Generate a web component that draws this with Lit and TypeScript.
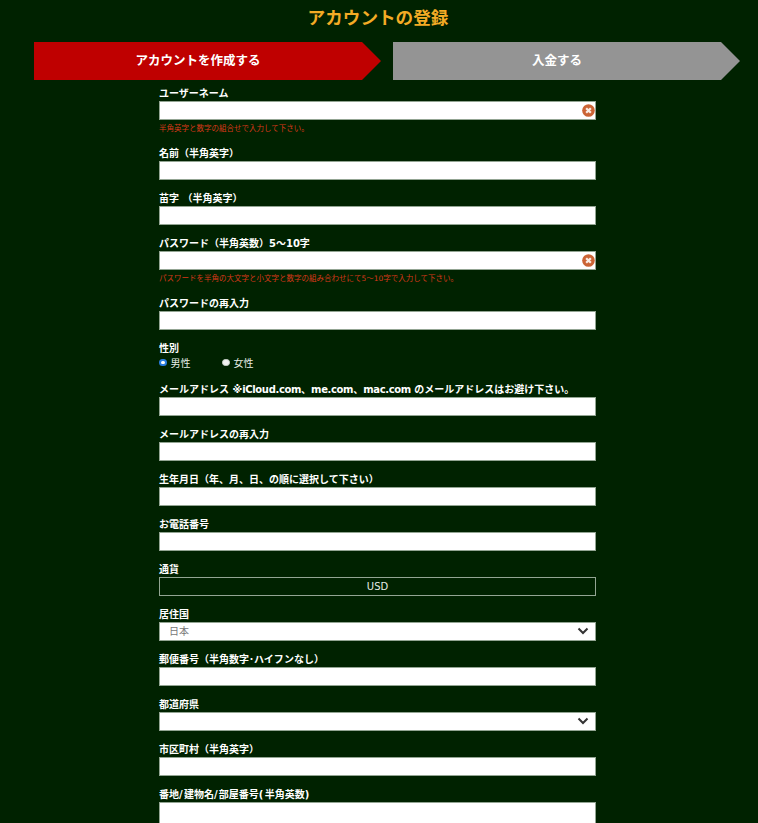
import { LitElement, html, css, nothing, TemplateResult } from "lit";
import { customElement } from "lit/decorators.js";

type Field = {
  label: string | TemplateResult;
  kind?: "text" | "select" | "readonly" | "radio";
  value?: string;
  error?: string;
};

const FIELDS: Field[] = [
  { label: "ユーザーネーム", error: "半角英字と数字の組合せで入力して下さい。" },
  { label: "名前（半角英字）" },
  { label: "苗字 （半角英字）" },
  { label: "パスワード（半角英数）5〜10字", error: "パスワードを半角の大文字と小文字と数字の組み合わせにて5〜10字で入力して下さい。" },
  { label: "パスワードの再入力" },
  { label: "性別", kind: "radio" },
  { label: html`メールアドレス ※<span class="latin">iCloud.com</span>、<span class="latin">me.com</span>、<span class="latin">mac.com</span> のメールアドレスはお避け下さい。` },
  { label: "メールアドレスの再入力" },
  { label: "生年月日（年、月、日、の順に選択して下さい）" },
  { label: "お電話番号" },
  { label: "通貨", kind: "readonly", value: "USD" },
  { label: "居住国", kind: "select", value: "日本" },
  { label: "郵便番号（半角数字･ハイフンなし）" },
  { label: "都道府県", kind: "select", value: "" },
  { label: "市区町村（半角英字）" },
  { label: html`番地<span class="slash">/</span>建物名<span class="slash">/</span>部屋番号<span class="slash">(</span>半角英数<span class="slash">)</span>` },
];

@customElement("app-root")
export class AppRoot extends LitElement {
  static styles = css`
    :host {
      display: block;
      height: 823px;
      overflow: hidden;
      background: #002200;
      color: #fff;
      font-family: "DejaVu Sans", "Noto Sans CJK JP", sans-serif;
    }
    h1 {
      margin: 0;
      height: 34px;
      line-height: 36px;
      text-align: center;
      font-size: 17.6px;
      font-weight: 700;
      color: #f3ab25;
      padding-right: 2px;
    }
    .steps {
      display: flex;
      gap: 12px;
      margin: 8px 18px 7px 34px;
    }
    .step {
      flex: 1;
      height: 38px;
      line-height: 38px;
      padding-right: 19px;
      text-align: center;
      font-size: 12.5px;
      font-weight: 700;
      clip-path: polygon(0 0, calc(100% - 19px) 0, 100% 50%, calc(100% - 19px) 100%, 0 100%);
    }
    .step.on { background: #bf0000; }
    .step.off { background: #949494; }
    form {
      width: 437px;
      margin-left: 159px;
    }
    .field { margin-bottom: 12px; }
    .field.gender { margin-bottom: 11px; }
    label, .lbl {
      display: block;
      height: 14px;
      line-height: 13px;
      font-size: 10px;
      font-weight: 700;
      white-space: nowrap;
    }
    .latin { letter-spacing: -0.35px; }
    .slash { letter-spacing: 1.25px; }
    .box {
      position: relative;
      height: 19px;
      box-sizing: border-box;
      border: 1px solid #93a593;
      background: #fff;
    }
    .box.tall { height: 60px; }
    input {
      display: block;
      width: 100%;
      height: 100%;
      box-sizing: border-box;
      border: 0;
      padding: 0 8px;
      background: transparent;
      outline: none;
    }
    .readonly {
      background: transparent;
      text-align: center;
      font-size: 10px;
      line-height: 18px;
      color: #e4ebe4;
    }
    .sel {
      padding-left: 9px;
      font-size: 10px;
      line-height: 18px;
      color: #777;
    }
    .chev {
      position: absolute;
      right: 6px;
      top: 3px;
      width: 12px;
      height: 10px;
    }
    .bad {
      position: absolute;
      right: 0;
      top: 1.5px;
      width: 13px;
      height: 13px;
    }
    .err {
      margin-top: 1px;
      height: 14px;
      line-height: 16px;
      font-size: 7.5px;
      color: #d8381a;
      white-space: nowrap;
    }
    .radios {
      display: flex;
      height: 16px;
      box-sizing: border-box;
      padding-bottom: 3px;
      align-items: center;
      font-size: 10px;
      color: #e8eee8;
    }
    .radio {
      display: flex;
      align-items: center;
      gap: 4px;
      width: 63px;
    }
    .dot {
      width: 7.5px;
      height: 7.5px;
      box-sizing: border-box;
      border-radius: 50%;
      background: #f2f2f2;
      border: 1px solid #cfd6cf;
    }
    .dot.sel-on {
      border: 2px solid #2a7de1;
      background: #fff;
    }
  `;

  private control(f: Field, tall: boolean) {
    if (f.kind === "readonly") {
      return html`<div class="box readonly">${f.value}</div>`;
    }
    if (f.kind === "select") {
      return html`<div class="box sel">
        ${f.value}
        <svg class="chev" viewBox="0 0 12 10">
          <path d="M1.5 2.5 L6 7 L10.5 2.5" fill="none" stroke="#333" stroke-width="2" />
        </svg>
      </div>`;
    }
    return html`<div class="box ${tall ? "tall" : ""}">
      <input type="text" />
      ${f.error
        ? html`<svg class="bad" viewBox="0 0 14 14">
            <circle cx="7" cy="7" r="6.8" fill="#cb6435" />
            <path d="M4.5 4.5 L9.5 9.5 M9.5 4.5 L4.5 9.5" stroke="#fbeee6" stroke-width="2.4" />
          </svg>`
        : nothing}
    </div>`;
  }

  render() {
    return html`
      <h1>アカウントの登録</h1>
      <div class="steps">
        <div class="step on">アカウントを作成する</div>
        <div class="step off">入金する</div>
      </div>
      <form>
        ${FIELDS.map((f, i) =>
          f.kind === "radio"
            ? html`<div class="field gender">
                <div class="lbl">${f.label}</div>
                <div class="radios">
                  <span class="radio"><span class="dot sel-on"></span>男性</span>
                  <span class="radio"><span class="dot"></span>女性</span>
                </div>
              </div>`
            : html`<div class="field">
                <label>${f.label}</label>
                ${this.control(f, i === FIELDS.length - 1)}
                ${f.error ? html`<div class="err">${f.error}</div>` : nothing}
              </div>`
        )}
      </form>
    `;
  }
}
